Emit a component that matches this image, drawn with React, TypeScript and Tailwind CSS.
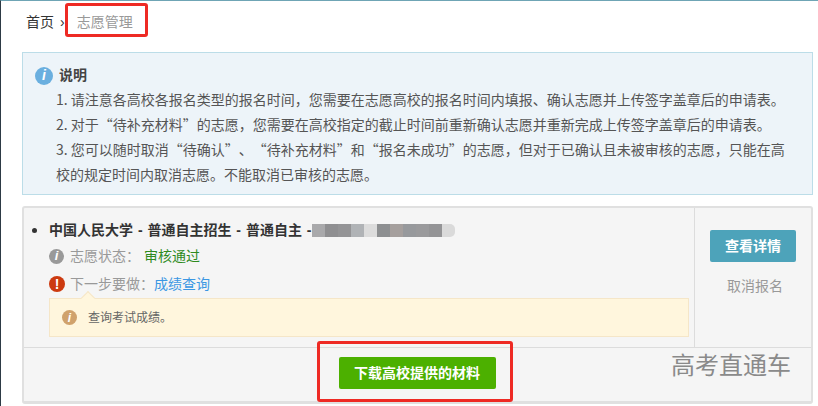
const cjk = "font-['Liberation_Sans','Noto_Sans_CJK_SC',sans-serif]"

const notes = [
  "1. 请注意各高校各报名类型的报名时间，您需要在志愿高校的报名时间内填报、确认志愿并上传签字盖章后的申请表。",
  "2. 对于“待补充材料”的志愿，您需要在高校指定的截止时间前重新确认志愿并重新完成上传签字盖章后的申请表。",
  "3. 您可以随时取消“待确认”、“待补充材料”和“报名未成功”的志愿，但对于已确认且未被审核的志愿，只能在高校的规定时间内取消志愿。不能取消已审核的志愿。",
]

const blur = [
  "bg-[#a9a9ab]", "bg-[#8f8f91]", "bg-[#949496]", "bg-[#b0b3b6]", "bg-[#dcdcdc]", "bg-[#8d8f91]", "bg-[#a59f9d]", "bg-[#97999c]", "bg-[#9a9a9c]", "bg-[#949496]", "bg-[#dadada] rounded-r-[5px]",
]

function RoundIcon({ color, glyph, size }: { color: string; glyph: string; size: string }) {
  return (
    <span className={`flex shrink-0 items-center justify-center rounded-full font-bold italic text-white ${color} ${size}`}>
      {glyph}
    </span>
  )
}

export default function App() {
  return (
    <div className={`relative h-[406px] w-[818px] overflow-hidden border-l border-t border-l-[#2d3a45] border-t-[#6fa5b5] bg-white ${cjk}`}>
      {/* breadcrumb */}
      <div className="flex h-[51px] items-center pb-[9px] pl-[25px] text-[14px]">
        <span className="text-[#333]">首页</span>
        <span className="ml-[6px] text-[#333]">›</span>
        <span className="ml-[12px] text-[#999]">志愿管理</span>
      </div>

      {/* notice */}
      <div className="ml-[21px] h-[143px] w-[791px] border border-[#bcdde8] bg-[#edf4f9] pl-[12px] pt-[12px] text-[14px] text-[#555]">
        <div className="flex items-center gap-[6px]">
          <RoundIcon color="bg-[#6aafdf]" glyph="i" size="h-[18px] w-[18px] text-[14px]" />
          <span className="font-bold text-[#444]">说明</span>
        </div>
        <ul className="ml-[21px] mt-[1px] w-[732px] font-['Noto_Sans_CJK_SC',sans-serif] leading-[25px] [text-spacing-trim:space-all]">
          {notes.map((n) => (
            <li key={n}>{n}</li>
          ))}
        </ul>
      </div>

      {/* application card */}
      <div className="ml-[21px] mt-[11px] h-[198px] w-[791px] rounded-[3px] border-2 border-b-[3px] border-[#e0e0e0] bg-[#f5f5f5]">
        <div className="flex h-[140px] border-b border-[#dcdcdc]">
          <div className="flex-1 pl-[25px] pt-[14px]">
            <div className="relative flex h-[16px] items-center text-[14px] font-bold text-[#333] [word-spacing:1px]">
              <span className="absolute left-[-17px] top-[6px] h-[5px] w-[5px] rounded-full bg-[#333]" />
              中国人民大学 - 普通自主招生 - 普通自主 -
              <span className="ml-[1px] flex h-[13px] items-center">
                {blur.map((c, i) => (
                  <span key={i} className={`h-[13px] w-[13px] ${c}`} />
                ))}
              </span>
            </div>
            <div className="mt-[9px] flex h-[18px] items-center text-[14px] text-[#999]">
              <RoundIcon color="bg-[#999]" glyph="i" size="h-[15px] w-[15px] text-[13px]" />
              <span className="ml-[6px]">志愿状态：</span>
              <span className="ml-[4px] text-[#2e8b1e]">审核通过</span>
            </div>
            <div className="mt-[10px] flex h-[18px] items-center text-[14px] text-[#999]">
              <RoundIcon color="bg-[#cc3a10] not-italic" glyph="!" size="h-[16px] w-[16px] text-[14px]" />
              <span className="ml-[5px]">下一步要做：</span>
              <span className="text-[#3b97e3]">成绩查询</span>
            </div>
            <div className="relative mt-[5px] flex h-[39px] w-[640px] items-center border border-[#f5e6c8] bg-[#fff6dd] pl-[12px] text-[12px] text-[#666]">
              <span className="absolute left-[33px] top-[-6px] h-[10px] w-[10px] rotate-45 border-l border-t border-[#f5e6c8] bg-[#fff6dd]" />
              <RoundIcon color="bg-[#d0a26c]" glyph="i" size="h-[15px] w-[15px] text-[12px]" />
              <span className="ml-[11px]">查询考试成绩。</span>
            </div>
          </div>
          <div className="flex w-[117px] flex-col items-center border-l border-[#dcdcdc] pt-[22px]">
            <button className="h-[32px] w-[86px] rounded-[2px] bg-[#4da3ba] text-[14px] font-bold text-white">查看详情</button>
            <span className="mt-[14px] pl-[4px] text-[14px] text-[#999]">取消报名</span>
          </div>
        </div>
        <div className="flex justify-center pr-[1px] pt-[9px]">
          <button className="h-[32px] w-[157px] rounded-[2px] bg-[#4cb000] text-[14px] font-bold text-white">下载高校提供的材料</button>
        </div>
      </div>

      {/* screenshot annotations */}
      <div className="absolute left-[64px] top-[2px] h-[34px] w-[83px] rounded-[3px] border-[3px] border-[#ee2a24]" />
      <div className="absolute left-[316px] top-[340px] h-[61px] w-[196px] rounded-[3px] border-[3px] border-[#ee2a24]" />
      <span className="absolute left-[670px] top-[350px] text-[24px] leading-[30px] text-[#8a8a8a]">高考直通车</span>
    </div>
  )
}
